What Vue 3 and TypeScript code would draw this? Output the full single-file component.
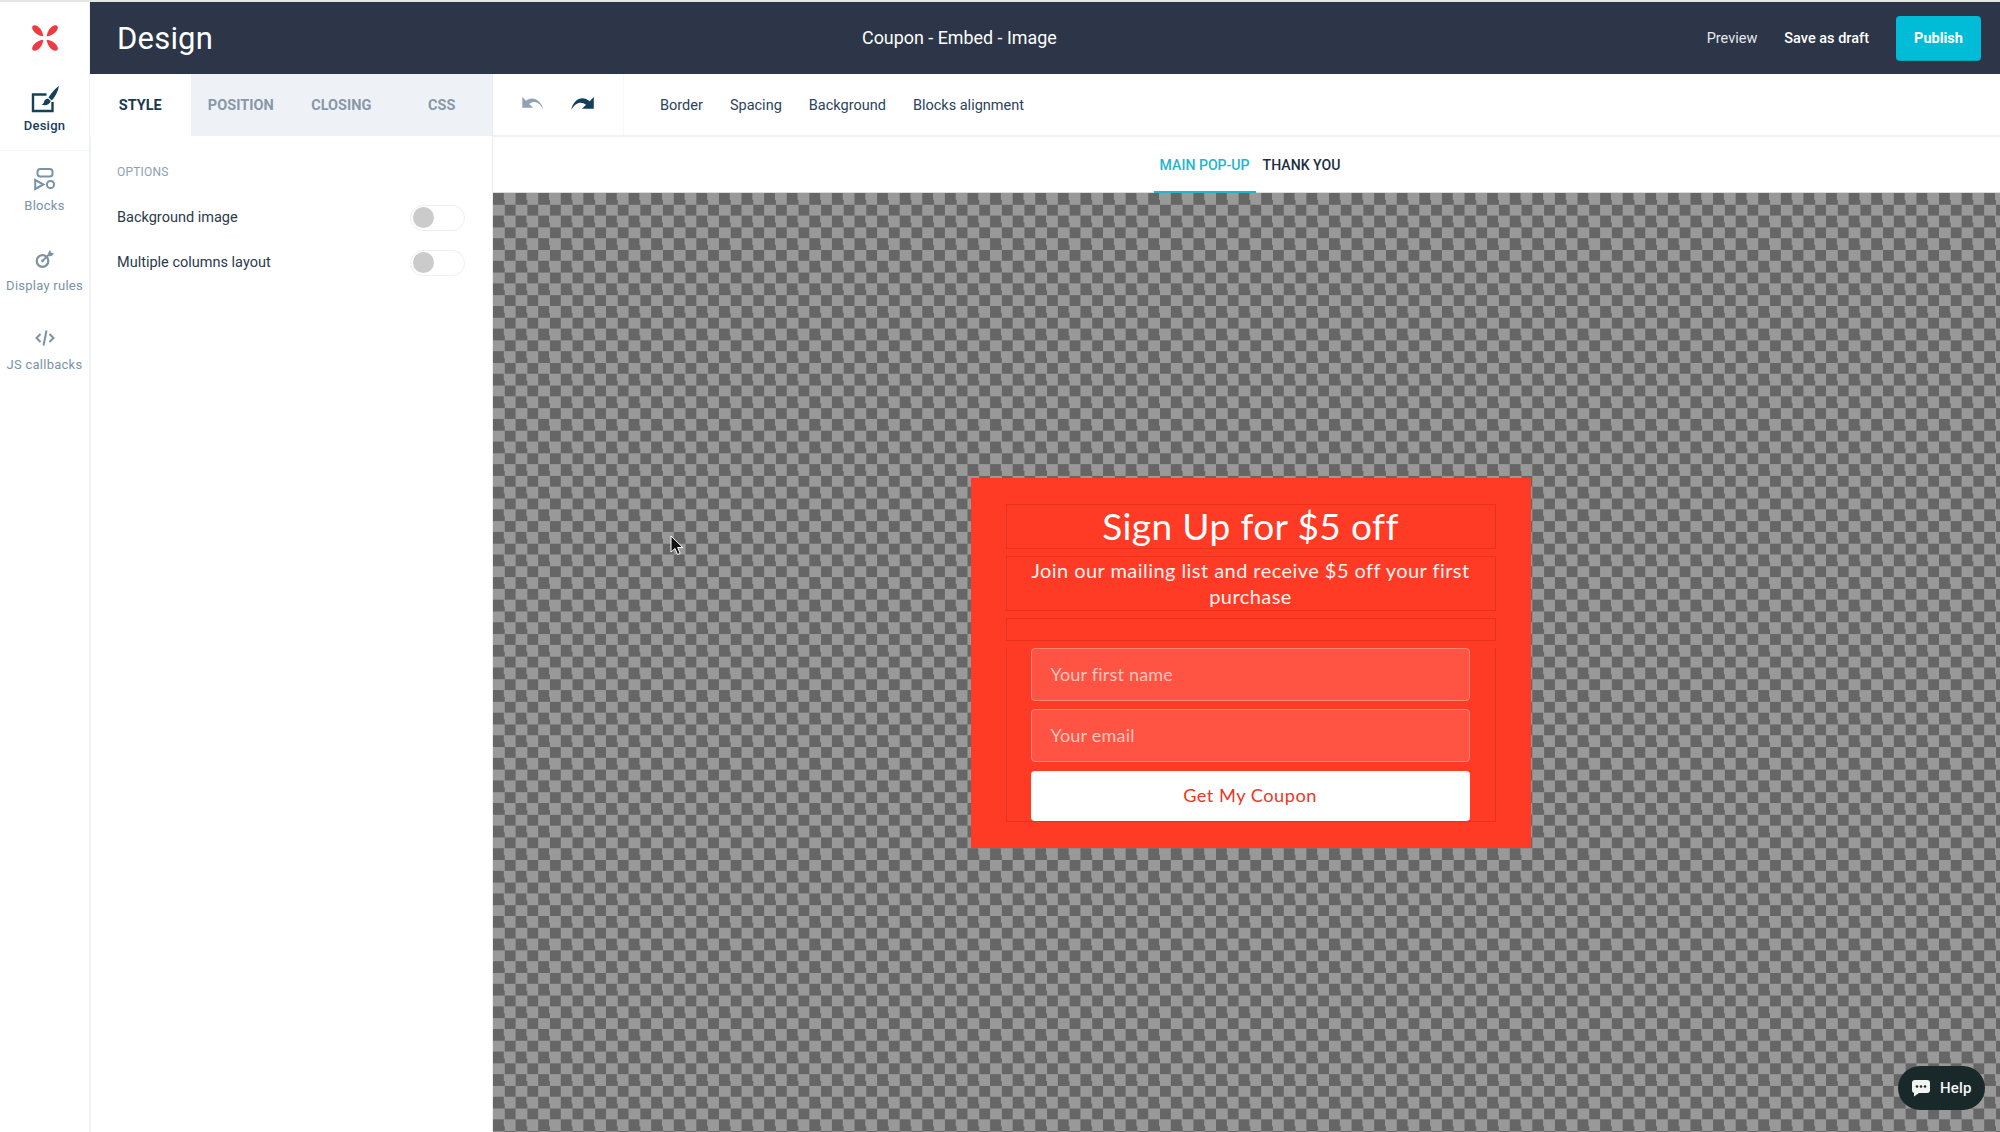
<script setup lang="ts">
const tabs: string[] = ['STYLE', 'POSITION', 'CLOSING', 'CSS']
const tools: string[] = ['Border', 'Spacing', 'Background', 'Blocks alignment']
const options: string[] = ['Background image', 'Multiple columns layout']
</script>

<template>
  <div class="page">
    <aside class="rail">
      <div class="logo">
        <svg width="28" height="28" viewBox="0 0 28 28">
          <g fill="#ef3a42">
            <path d="M12.300 12.300C7 11.800 2 8 1.200 4.200.8 2.200 2.200.8 4.200 1.200 8 2 11.800 7 12.300 12.300Z" />
            <path d="M15.700 12.300C21 11.800 26 8 26.800 4.200 27.200 2.200 25.800.8 23.800 1.200 20 2 16.200 7 15.700 12.300Z" />
            <path d="M12.300 15.700C7 16.200 2 20 1.200 23.800.8 25.800 2.200 27.200 4.200 26.800 8 26 11.800 21 12.300 15.700Z" />
            <path d="M15.700 15.700C21 16.200 26 20 26.800 23.800 27.200 25.800 25.800 27.200 23.800 26.800 20 26 16.200 21 15.700 15.700Z" />
          </g>
        </svg>
      </div>
      <div class="rail-item active first">
        <svg width="30" height="30" viewBox="0 0 30 30">
          <path d="M16.500 9.500H3V26h19.500V17" fill="none" stroke="#17405a" stroke-width="2.400" />
          <path d="M29 1c-3.500 2-7.500 6.500-10.500 11.500l3.300 3C25.500 11.500 28 6 29 1Z" fill="#17405a" />
          <path d="M18 13.500c-2.500.3-3.700 1.800-4 3.500-.2 1.300-1 2-2.500 2.500 3.300 1.500 8 .5 9.300-3.500Z" fill="#17405a" />
        </svg>
        <span>Design</span>
      </div>
      <div class="rail-item">
        <svg width="22" height="22" viewBox="0 0 22 22">
          <rect x="3.500" y="1" width="15" height="7.500" rx="2.800" fill="none" stroke="#7d92a5" stroke-width="2" />
          <path d="M1.200 12v9l8.300-4.500Z" fill="none" stroke="#7d92a5" stroke-width="2" />
          <circle cx="16.500" cy="16.500" r="3.600" fill="none" stroke="#7d92a5" stroke-width="2" />
        </svg>
        <span>Blocks</span>
      </div>
      <div class="rail-item">
        <svg width="20" height="20" viewBox="0 0 20 20">
          <circle cx="7.500" cy="12" r="5.800" fill="none" stroke="#7d92a5" stroke-width="2.200" />
          <circle cx="7.500" cy="12" r="1.400" fill="#7d92a5" />
          <path d="M8 11.500 14 5.500" stroke="#7d92a5" stroke-width="2" />
          <path d="M15 .8l1 2.700 3 1-2.300 2.500-3 .2-.6-3Z" fill="#7d92a5" />
        </svg>
        <span>Display rules</span>
      </div>
      <div class="rail-item">
        <svg width="20" height="18" viewBox="0 0 20 18">
          <path d="M5.500 5 1.500 9l4 4M14.500 5l4 4-4 4M11.500 1.500l-3 15" fill="none" stroke="#7d92a5" stroke-width="2" />
        </svg>
        <span>JS callbacks</span>
      </div>
    </aside>

    <div class="workspace">
      <header class="topbar">
        <h1>Design</h1>
        <div class="doc-title">Coupon - Embed - Image</div>
        <div class="actions">
          <span class="preview">Preview</span>
          <span class="draft">Save as draft</span>
          <button class="publish">Publish</button>
        </div>
      </header>

      <div class="body">
        <section class="panel">
          <nav class="tabs">
            <div v-for="(t, i) in tabs" :key="t" class="tab" :class="{ current: i === 0 }">{{ t }}</div>
          </nav>
          <div class="options">
            <div class="options-title">OPTIONS</div>
            <div v-for="o in options" :key="o" class="option">
              <span>{{ o }}</span>
              <div class="toggle"><i></i></div>
            </div>
          </div>
        </section>

        <section class="editor">
          <div class="toolbar">
            <div class="history">
              <svg width="24" height="15" viewBox="0 0 22 14">
                <path d="M1 1v10h10L7.500 7.500C11.500 4 16.500 5 20.500 12.500 18.500 3.500 10.500-.5 4.500 4.500Z" fill="#8fa3b5" />
              </svg>
              <svg width="26" height="15" viewBox="0 0 24 14">
                <path d="M23 1v11H12l3.800-3.800C11.500 4.700 6 5.500 2 13 3.500 3.500 12.500-1.500 19.200 5Z" fill="#12405c" />
              </svg>
            </div>
            <div class="tools">
              <span v-for="t in tools" :key="t">{{ t }}</span>
            </div>
          </div>
          <div class="subtabs">
            <span class="sub on">MAIN POP-UP</span>
            <span class="sub">THANK YOU</span>
          </div>
          <div class="canvas">
            <div class="popup">
              <div class="block title">Sign Up for $5 off</div>
              <div class="block lead">Join our mailing list and receive $5 off your first purchase</div>
              <div class="block spacer"></div>
              <div class="block form">
                <div class="field">Your first name</div>
                <div class="field">Your email</div>
                <div class="cta">Get My Coupon</div>
              </div>
            </div>
            <svg class="cursor" width="14" height="22" viewBox="0 0 14 22">
              <path d="M1 1v16l4-3.500 2.600 6 2.600-1.100-2.600-5.900h5.200Z" fill="#111" stroke="#fff" stroke-width="1" />
            </svg>
            <div class="help">
              <svg width="20" height="18" viewBox="0 0 20 18">
                <path d="M4 1h12a3 3 0 0 1 3 3v7a3 3 0 0 1-3 3H8l-5 3.500V14a3 3 0 0 1-2-3V4a3 3 0 0 1 3-3Z" fill="#f2f4f3" />
                <circle cx="6" cy="7.500" r="1.300" fill="#1a2a28" />
                <circle cx="10" cy="7.500" r="1.300" fill="#1a2a28" />
                <circle cx="14" cy="7.500" r="1.300" fill="#1a2a28" />
              </svg>
              <span>Help</span>
            </div>
          </div>
        </section>
      </div>
    </div>
  </div>
</template>

<style>
html, body { margin: 0; padding: 0; background: #fff; }
</style>

<style scoped>
.page {
  width: 2000px; height: 1132px; display: flex; overflow: hidden; box-sizing: border-box;
  border-top: 2px solid #e6e6e6; font-family: Roboto, "Liberation Sans", sans-serif; background: #fff;
}
.rail { width: 91px; flex: none; border-right: 2px solid #eef2f6; box-sizing: border-box; display: flex; flex-direction: column; }
.logo { height: 72px; display: flex; align-items: center; justify-content: center; }
.rail-item { height: 79.500px; display: flex; flex-direction: column; align-items: center; padding-top: 15px; box-sizing: border-box; color: #7d92a5; font-size: 13px; line-height: 16px; letter-spacing: .25px; }
.rail-item svg { height: 26px; margin-bottom: 6px; }
.rail-item.first { height: 77px; padding-top: 11px; border-bottom: 1px solid #f3f5f8; color: #17405a; font-weight: 500; }
.rail-item.first svg { height: 30px; margin-bottom: 3px; }
.workspace { flex: 1; min-width: 0; margin-left: -1px; display: flex; flex-direction: column; }
.topbar { height: 72px; flex: none; background: #2c3648; color: #fff; display: flex; align-items: center; padding: 0 19px 0 27px; }
h1 { margin: 0; width: 745px; font-size: 31px; font-weight: 400; letter-spacing: .2px; }
.doc-title { font-size: 17.900px; padding-bottom: 1px; }
.actions { margin-left: auto; display: flex; align-items: center; }
.preview { font-size: 14.500px; color: #e6e9ed; margin-right: 27px; }
.draft { font-size: 14.500px; font-weight: 500; margin-right: 27px; }
.publish { width: 85px; height: 45px; border: 0; border-bottom: 1px solid #04a5bb; border-radius: 4px; background: #00bcd6; color: #fff; font: 700 14.500px Roboto, sans-serif; padding: 2px 0 0; }
.body { flex: 1; display: flex; min-height: 0; }
.panel { width: 403px; flex: none; border-right: 1px solid #e9edf2; box-sizing: border-box; }
.tabs { display: flex; height: 62px; background: #eef2f7; }
.tab { width: 100.500px; display: flex; align-items: center; justify-content: center; font-size: 14.500px; font-weight: 700; color: #8798a8; box-sizing: border-box; }
.tab.current { background: #fff; color: #1c3850; }
.options { padding: 28px 27px 0 27px; }
.options-title { font-size: 12px; line-height: 16px; color: #8ea0b1; margin-bottom: 15px; letter-spacing: .2px; }
.option { display: flex; align-items: center; justify-content: space-between; height: 45px; font-size: 14.500px; color: #2b3a4a; }
.toggle { width: 55px; height: 26px; box-sizing: border-box; border: 1px solid #eceff3; border-radius: 13px; display: flex; align-items: center; padding-left: 2px; }
.toggle i { width: 21px; height: 21px; border-radius: 50%; background: #cbcbcb; }
.editor { flex: 1; min-width: 0; display: flex; flex-direction: column; }
.toolbar { height: 63px; flex: none; display: flex; align-items: center; border-bottom: 2px solid #f0f2f5; box-sizing: border-box; }
.history { width: 131px; height: 100%; border-right: 1px solid #f6f7f9; box-sizing: border-box; display: flex; align-items: center; gap: 24px; padding: 0 0 3px 28px; }
.tools { display: flex; gap: 27px; padding-left: 36px; font-size: 14.500px; color: #2c4359; padding-top: 2px; }
.subtabs { height: 56px; flex: none; position: relative; display: flex; justify-content: center; align-items: center; gap: 13px; font-size: 14.100px; font-weight: 500; color: #1b2f44; padding: 1px 0 1px 7px; border-bottom: 1px solid #dcdcdc; box-sizing: border-box; }
.sub { position: relative; line-height: 54px; height: 54px; }
.sub.on { color: #22b6cf; }
.sub.on::after { content: ''; position: absolute; left: -6px; right: -6px; bottom: -2px; height: 3px; background: #22b6cf; }
.canvas {
  flex: 1; min-height: 0; position: relative; display: flex; align-items: center; justify-content: center;
  padding-left: 8px;
  background: repeating-conic-gradient(#999 0 25%, #666 0 50%) 0 0 / 22.600px 22.600px;
}
.popup { width: 560px; height: 370px; box-sizing: border-box; background: #ff3b25; padding: 26px 35px 0 35px; display: flex; flex-direction: column; color: #fff; font-family: Lato, "Open Sans", sans-serif; text-align: center; }
.block { border: 1px solid rgba(170, 30, 20, .28); box-sizing: border-box; }
.title { height: 45px; font-size: 37px; line-height: 41px; margin-bottom: 7px; letter-spacing: .4px; }
.lead { height: 55px; font-size: 20px; line-height: 26.500px; padding: 0 15px; margin-bottom: 7px; color: #fff3f0; letter-spacing: .45px; }
.spacer { height: 23px; margin-bottom: 7px; }
.form { height: 174px; padding: 0 25px 0 24px; display: flex; flex-direction: column; gap: 8px; text-align: left; border-top: 0; }
.field { height: 53px; flex: none; box-sizing: border-box; border: 1px solid #ff8a7c; border-radius: 4px; background: #ff5444; color: #ffc4bc; font-size: 18px; line-height: 51px; padding-left: 19px; letter-spacing: .2px; }
.cta { height: 50px; flex: none; margin-top: 1px; background: #fff; border-radius: 4px; color: #ee3526; font-size: 18.200px; line-height: 49px; text-align: center; letter-spacing: .5px; }
.cursor { position: absolute; left: 177px; top: 342px; }
.help { position: absolute; right: 15px; bottom: 22px; width: 87px; height: 44px; border-radius: 22px; background: #19292a; color: #f4f6f5; display: flex; align-items: center; gap: 9px; padding-left: 13px; box-sizing: border-box; font: 500 15px Roboto, sans-serif; letter-spacing: .2px; }
</style>
